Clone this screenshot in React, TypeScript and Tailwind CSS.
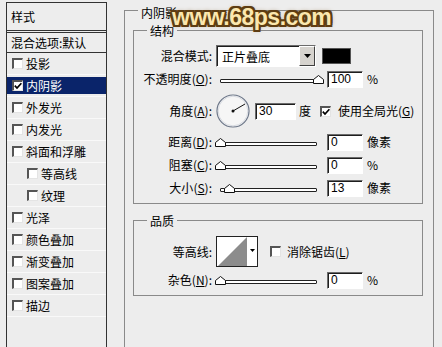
import React from 'react';

const sunken =
  'border border-t-[#6b6b6b] border-l-[#6b6b6b] border-b-white border-r-white shadow-[inset_1px_1px_0_#1e1e1e] bg-white';

function Check({ checked }: { checked?: boolean }) {
  return (
    <span className="flex h-[11px] w-[11px] shrink-0 items-center justify-center border-t-2 border-l-2 border-r border-b border-t-[#555] border-l-[#555] border-r-[#e4e4e4] border-b-[#e4e4e4] bg-white">
      {checked && (
        <svg width="8" height="8" viewBox="0 0 8 8">
          <path d="M0.8 3.6 L3 6 L7.4 1.2" stroke="#000" strokeWidth="1.7" fill="none" />
        </svg>
      )}
    </span>
  );
}

function Label({ text, k, tail = ':' }: { text: string; k?: string; tail?: string }) {
  return (
    <span className="w-[78px] shrink-0 text-right whitespace-nowrap">
      {text}
      {k && (
        <>
          (<span className="underline underline-offset-1">{k}</span>)
        </>
      )}
      {tail}
    </span>
  );
}

function Slider({ pos }: { pos: number }) {
  return (
    <div className="relative ml-[4px] flex h-[9px] w-[102px] shrink-0 items-end pb-[1px]">
      <div className="ml-[4px] h-[4px] w-[97px] rounded-[1px] border border-[#222] bg-white" />
      <svg
        className="absolute top-0"
        style={{ left: pos - 5 }}
        width="11"
        height="9"
        viewBox="0 0 11 9"
      >
        <path d="M0.5 8.5 V4.5 L5.5 0.5 L10.5 4.5 V8.5 Z" fill="#fff" stroke="#111" />
      </svg>
    </div>
  );
}

function NumBox({ value, w = 'w-[36px]' }: { value: string; w?: string }) {
  return (
    <div className={`flex h-[17px] ${w} shrink-0 items-center pl-[3px] font-['Liberation_Sans',sans-serif] text-[12px] leading-none ${sunken}`}>
      {value}
    </div>
  );
}

function SliderRow(props: { text: string; k: string; pos: number; value: string; unit: string; mt: string }) {
  return (
    <div className={`flex h-[18px] items-center ${props.mt}`}>
      <Label text={props.text} k={props.k} />
      <Slider pos={props.pos} />
      <div className="ml-[9px]">
        <NumBox value={props.value} />
      </div>
      <span className="ml-[4px]">{props.unit}</span>
    </div>
  );
}

const items = [
  { label: '投影' },
  { label: '内阴影', checked: true, active: true },
  { label: '外发光' },
  { label: '内发光' },
  { label: '斜面和浮雕' },
  { label: '等高线', indent: true },
  { label: '纹理', indent: true },
  { label: '光泽' },
  { label: '颜色叠加' },
  { label: '渐变叠加' },
  { label: '图案叠加' },
  { label: '描边' },
];

export default function App() {
  return (
    <div className="relative flex h-[347px] w-[442px] overflow-hidden bg-[#ededed] font-['Noto_Sans_CJK_SC','Liberation_Sans',sans-serif] text-[12px] leading-[16px] text-black">
      {/* left style list */}
      <div className="ml-[6px] mt-[2px] h-[360px] w-[101px] shrink-0 border-x border-t border-[#333]">
        <div className="flex h-[30px] items-center border-b-[3px] border-double border-[#333] pl-[4px]">样式</div>
        <div className="flex h-[20px] items-center border-b border-[#333] pl-[4px] whitespace-nowrap">混合选项:默认</div>
        {items.map((it) => (
          <div key={it.label} className="h-[22px] border-b border-[#f9f9f9] pt-[2px] pb-[2px]">
            <div
              className={`flex h-full items-center gap-[3px] ${it.indent ? 'pl-[20px]' : 'pl-[5px]'} ${
                it.active ? 'bg-[#0a246a] text-white' : ''
              }`}
            >
              <Check checked={it.checked} />
              <span>{it.label}</span>
            </div>
          </div>
        ))}
      </div>

      {/* right settings */}
      <fieldset className="ml-[17px] -mt-px h-[370px] w-[310px] shrink-0 border border-[#8a8a8a] px-[8px] pb-0">
        <legend className="ml-[5px] h-[22px] px-[3px] pt-[6px] leading-[16px]">内阴影</legend>

        <fieldset className="w-[290px] border border-[#8a8a8a] px-0 pt-[6px] pb-[6px]">
          <legend className="ml-[13px] h-[18px] px-[3px] pt-[2px] leading-[16px]">结构</legend>

          <div className="flex h-[22px] items-center">
            <Label text="混合模式" />
            <div className={`ml-[4px] flex h-[22px] w-[100px] items-center ${sunken}`}>
              <span className="flex-1 pl-[5px] pt-[1px]">正片叠底</span>
              <span className="flex h-full w-[16px] items-center justify-center border border-t-white border-l-white border-r-[#404040] border-b-[#404040] bg-[#d6d3ce]">
                <svg width="7" height="4" viewBox="0 0 7 4">
                  <path d="M0 0 H7 L3.5 4 Z" fill="#000" />
                </svg>
              </span>
            </div>
            <div className="ml-[6px] h-[16px] w-[29px] border border-[#555] bg-black" />
          </div>

          <SliderRow text="不透明度" k="O" pos={102} value="100" unit="%" mt="mt-[3px]" />

          <div className="mt-[6px] flex h-[34px] items-center">
            <Label text="角度" k="A" />
            <svg className="ml-[4px] shrink-0" width="34" height="34" viewBox="0 0 34 34">
              <circle cx="17" cy="17" r="16" fill="#f6f6f6" stroke="#6c7688" strokeWidth="1.2" />
              <circle cx="17" cy="17" r="14.8" fill="none" stroke="#d0d4dc" strokeWidth="0.8" />
              <line x1="17" y1="17" x2="29" y2="10" stroke="#111" strokeWidth="1" />
              <circle cx="17" cy="17" r="1.5" fill="#111" />
            </svg>
            <div className="ml-[5px]">
              <NumBox value="30" w="w-[41px]" />
            </div>
            <span className="ml-[3px]">度</span>
            <span className="ml-[9px]">
              <Check checked />
            </span>
            <span className="ml-[7px] whitespace-nowrap">
              使用全局光(<span className="underline underline-offset-1">G</span>)
            </span>
          </div>

          <SliderRow text="距离" k="D" pos={4} value="0" unit="像素" mt="mt-[5px]" />
          <SliderRow text="阻塞" k="C" pos={4} value="0" unit="%" mt="mt-[5px]" />
          <SliderRow text="大小" k="S" pos={13} value="13" unit="像素" mt="mt-[5px]" />
        </fieldset>

        <fieldset className="mt-[7px] w-[290px] border border-[#8a8a8a] px-0 pt-[7px] pb-[6px]">
          <legend className="ml-[13px] h-[18px] px-[3px] pt-[2px] leading-[16px]">品质</legend>

          <div className="flex h-[31px] items-center">
            <Label text="等高线" />
            <div className="ml-[4px] h-[31px] w-[42px] shrink-0 border border-[#222] bg-white">
              <svg width="40" height="29" viewBox="0 0 40 29">
                <path d="M1 29 L30 0 V29 Z" fill="#8c8c8c" />
                <path d="M33 12 H38 L35.5 15 Z" fill="#000" />
              </svg>
            </div>
            <span className="ml-[12px]">
              <Check />
            </span>
            <span className="ml-[6px] whitespace-nowrap">
              消除锯齿(<span className="underline underline-offset-1">L</span>)
            </span>
          </div>

          <SliderRow text="杂色" k="N" pos={4} value="0" unit="%" mt="mt-[4px]" />
        </fieldset>
      </fieldset>

      {/* watermark */}
      <div className="absolute left-[172px] top-[3px] font-['Liberation_Sans',sans-serif] text-[23px] leading-[28px] font-bold tracking-[-0.5px] text-[#fbe7ae] [text-shadow:2px_0_0_#5e3d12,-2px_0_0_#5e3d12,0_2px_0_#5e3d12,0_-2px_0_#5e3d12,2px_2px_0_#5e3d12,-2px_-2px_0_#5e3d12,2px_-2px_0_#5e3d12,-2px_2px_0_#5e3d12,0_0_5px_#8a6a3a]">
        www.68ps.com
      </div>
    </div>
  );
}
